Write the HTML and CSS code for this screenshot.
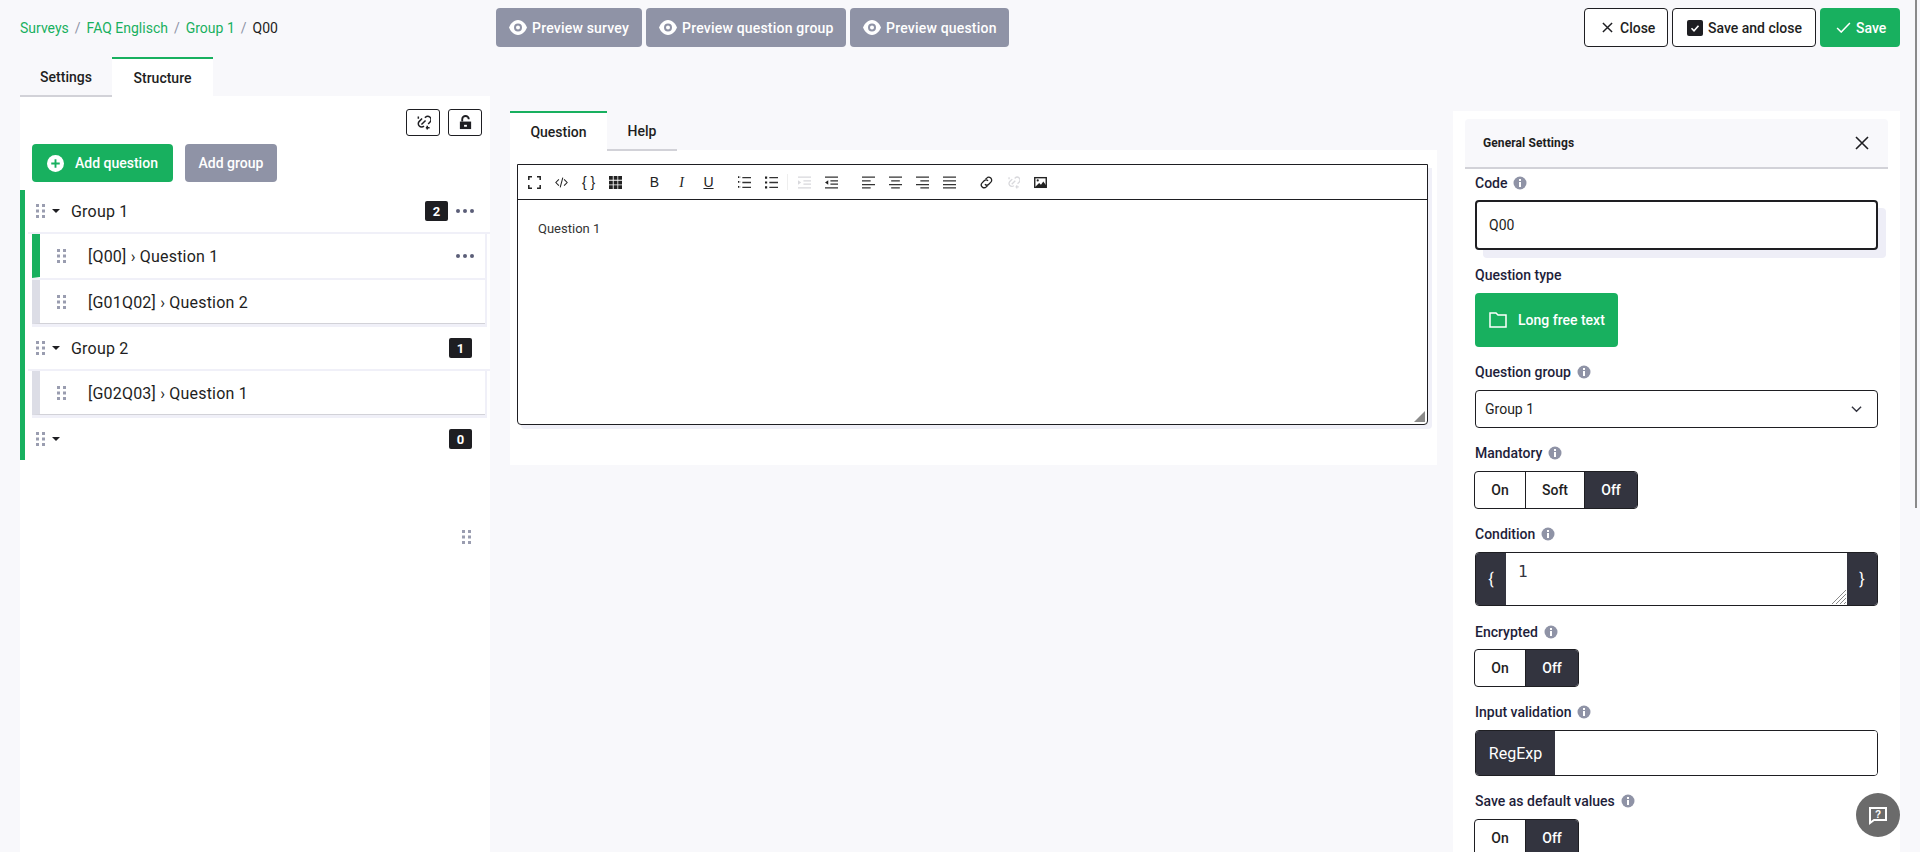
FILE: index.html
```html
<!DOCTYPE html>
<html lang="en">
<head>
<meta charset="utf-8">
<title>Q00</title>
<link rel="stylesheet" href="styles.css">
</head>
<body>
<svg class="defs" width="0" height="0" aria-hidden="true">
  <symbol id="grip" viewBox="0 0 9 14"><g fill="#9a9db0"><rect x="0" y="0" width="3" height="3"/><rect x="6" y="0" width="3" height="3"/><rect x="0" y="5.500" width="3" height="3"/><rect x="6" y="5.500" width="3" height="3"/><rect x="0" y="11" width="3" height="3"/><rect x="6" y="11" width="3" height="3"/></g></symbol>
  <symbol id="eye" viewBox="0 0 18 15"><path fill="#fff" d="M9 0C4.500 0 1.500 4 0 7.500 1.500 11 4.500 15 9 15s7.500-4 9-7.500C16.500 4 13.500 0 9 0z"/><circle cx="9" cy="7.500" r="3" fill="none" stroke="#8f93a6" stroke-width="2"/></symbol>
  <symbol id="dots" viewBox="0 0 18 4"><g fill="#5b5e78"><circle cx="2" cy="2" r="2"/><circle cx="9" cy="2" r="2"/><circle cx="16" cy="2" r="2"/></g></symbol>
  <symbol id="info" viewBox="0 0 14 14"><circle cx="7" cy="7" r="6.500" fill="#8f93a6"/><rect x="6" y="6" width="2" height="5" fill="#fff"/><rect x="6" y="3" width="2" height="2" fill="#fff"/></symbol>
  <symbol id="unlink" viewBox="0 0 16 16"><path fill="none" stroke="currentColor" stroke-width="1.600" d="M6.500 3.800 3.500 6.800a3.500 3.500 0 0 0 0 5 3.500 3.500 0 0 0 5 0M9.500 3 10 2.500a3.500 3.500 0 0 1 5 5l-2 2M5.800 10.200l4.400-4.400M2.500 1.500v2.500M12 11.500v4M10.500 13.500h4"/></symbol>
</svg>

<header class="topbar">
  <nav class="crumbs">
    <a>Surveys</a><span class="sep">/</span><a>FAQ Englisch</a><span class="sep">/</span><a>Group 1</a><span class="sep">/</span><span class="current">Q00</span>
  </nav>
  <div class="previews">
    <button class="btn grey pv-a"><svg class="eye"><use href="#eye"/></svg>Preview survey</button>
    <button class="btn grey pv-b"><svg class="eye"><use href="#eye"/></svg>Preview question group</button>
    <button class="btn grey pv-c"><svg class="eye"><use href="#eye"/></svg>Preview question</button>
  </div>
  <div class="actions">
    <button class="btn outline close-btn"><svg class="act-x" viewBox="0 0 12 12"><path d="M1 1l10 10M11 1 1 11" stroke="#1e1e22" stroke-width="1.600" fill="none"/></svg>Close</button>
    <button class="btn outline saveclose"><svg class="act-box" viewBox="0 0 16 16"><rect width="16" height="16" rx="2" fill="#1e1e22"/><path d="M4.500 8.300 7 10.800l4.500-5" stroke="#fff" stroke-width="1.600" fill="none"/></svg>Save and close</button>
    <button class="btn green savebtn"><svg class="act-check" viewBox="0 0 16 12"><path d="M1 6.500 5.500 11 15 1" stroke="#fff" stroke-width="1.600" fill="none"/></svg>Save</button>
  </div>
</header>

<main class="columns">
  <section class="left">
    <div class="tabs">
      <div class="tab t-settings">Settings</div>
      <div class="tab active t-structure">Structure</div>
    </div>
    <div class="tree">
      <div class="tree-tools">
        <button class="mini"><svg class="mini-ico"><use href="#unlink"/></svg></button>
        <button class="mini"><svg class="mini-ico" viewBox="0 0 16 16"><path fill="#1e1e22" d="M2 7h12v8H2z"/><path d="M4.500 7V4.500a3.500 3.500 0 0 1 7 0" fill="none" stroke="#1e1e22" stroke-width="2"/><rect x="6.500" y="10.500" width="3" height="2" fill="#fff"/></svg></button>
      </div>
      <div class="tree-add">
        <button class="btn green addq"><svg class="plus" viewBox="0 0 18 18"><circle cx="9" cy="9" r="9" fill="#fff"/><path d="M9 4.500v9M4.500 9h9" stroke="#18b05f" stroke-width="2"/></svg>Add question</button>
        <button class="btn grey addg">Add group</button>
      </div>
      <div class="groups">
        <div class="group">
          <svg class="grip"><use href="#grip"/></svg><span class="caret"></span><span class="gname">Group 1</span>
          <span class="count">2</span><svg class="dots"><use href="#dots"/></svg>
        </div>
        <div class="qs">
          <div class="q current-q">
            <svg class="grip"><use href="#grip"/></svg><span class="qname">[Q00] › Question 1</span><svg class="dots"><use href="#dots"/></svg>
          </div>
          <div class="q">
            <svg class="grip"><use href="#grip"/></svg><span class="qname">[G01Q02] › Question 2</span>
          </div>
        </div>
        <div class="group">
          <svg class="grip"><use href="#grip"/></svg><span class="caret"></span><span class="gname">Group 2</span>
          <span class="count solo">1</span>
        </div>
        <div class="qs">
          <div class="q">
            <svg class="grip"><use href="#grip"/></svg><span class="qname">[G02Q03] › Question 1</span>
          </div>
        </div>
        <div class="group">
          <svg class="grip"><use href="#grip"/></svg><span class="caret"></span><span class="gname"></span>
          <span class="count solo">0</span>
        </div>
      </div>
      <div class="resize-grip"><svg class="grip"><use href="#grip"/></svg></div>
    </div>
  </section>

  <section class="middle">
    <div class="tabs">
      <div class="tab active t-question">Question</div>
      <div class="tab t-help">Help</div>
    </div>
    <div class="editor-panel">
      <div class="editor">
        <div class="toolbar">
          <svg class="tb" viewBox="0 0 13 13"><path d="M.8 4V.8H4M9 .8h3.200V4M12.200 9v3.200H9M4 12.200H.8V9" fill="none" stroke="#222" stroke-width="1.500"/></svg>
          <svg class="tb" viewBox="0 0 15 13"><path d="M4.500 3 1 6.500 4.500 10M10.500 3 14 6.500 10.500 10M9 1 6 12" fill="none" stroke="#222" stroke-width="1.200"/></svg>
          <span class="tb glyph">{ }</span>
          <svg class="tb" viewBox="0 0 12 12"><path fill="#222" d="M0 0h3.500v3.500H0zM4.300 0h3.500v3.500H4.300zM8.500 0H12v3.500H8.500zM0 4.300h3.500v3.500H0zM4.300 4.300h3.500v3.500H4.300zM8.500 4.300H12v3.500H8.500zM0 8.500h3.500V12H0zM4.300 8.500h3.500V12H4.300zM8.500 8.500H12V12H8.500z"/></svg>
          <span class="tb glyph b">B</span>
          <span class="tb glyph i">I</span>
          <span class="tb glyph u">U</span>
          <svg class="tb g-list" viewBox="0 0 12 12"><path d="M4 1.500h8M4 6h8M4 10.500h8" stroke="#333" stroke-width="1.300"/><path d="M0 1h2M0 5.500h2M0 10h2" stroke="#222" stroke-width="1.600" stroke-dasharray="1 .6"/></svg>
          <svg class="tb" viewBox="0 0 12 12"><path d="M4 1.500h8M4 6h8M4 10.500h8" stroke="#333" stroke-width="1.300"/><path d="M0 1.500h2M0 6h2M0 10.500h2" stroke="#222" stroke-width="2"/></svg>
          <span class="tb-div"></span>
          <svg class="tb" viewBox="0 0 12 12"><path d="M0 1h12M5 4.500h7M5 7.500h7M0 11h12" stroke="#d8d8dc" stroke-width="1.300"/><path d="M0 4l3 2-3 2z" fill="#d8d8dc"/></svg>
          <svg class="tb" viewBox="0 0 12 12"><path d="M0 1h12M5 4.500h7M5 7.500h7M0 11h12" stroke="#333" stroke-width="1.300"/><path d="M3 4 0 6l3 2z" fill="#222"/></svg>
          <svg class="tb g-wide" viewBox="0 0 12 12"><path d="M0 1h12M0 4.500h8M0 8h12M0 11h8" stroke="#333" stroke-width="1.300"/></svg>
          <svg class="tb" viewBox="0 0 12 12"><path d="M0 1h12M2 4.500h8M0 8h12M2 11h8" stroke="#333" stroke-width="1.300"/></svg>
          <svg class="tb" viewBox="0 0 12 12"><path d="M0 1h12M4 4.500h8M0 8h12M4 11h8" stroke="#333" stroke-width="1.300"/></svg>
          <svg class="tb" viewBox="0 0 12 12"><path d="M0 1h12M0 4.500h12M0 8h12M0 11h12" stroke="#333" stroke-width="1.300"/></svg>
          <svg class="tb g-wide" viewBox="0 0 14 14"><path d="M6 3.500l1.200-1.200a3 3 0 0 1 4.500 4.300L9.500 8.800a3 3 0 0 1-4.200 0M8 10.500l-1.200 1.200a3 3 0 0 1-4.500-4.300l2.200-2.200a3 3 0 0 1 4.200 0" fill="none" stroke="#222" stroke-width="1.400"/></svg>
          <svg class="tb faded"><use href="#unlink"/></svg>
          <svg class="tb" viewBox="0 0 14 14"><rect x=".8" y="1.800" width="12.400" height="10.400" fill="none" stroke="#222" stroke-width="1.500"/><circle cx="4" cy="4.800" r="1.200" fill="#222"/><path d="M2 11l3.500-3.500 2 2L10 6l3 4v2H2z" fill="#222"/></svg>
        </div>
        <div class="editor-body">
          <p class="editor-text">Question 1</p>
          <svg class="resizer" viewBox="0 0 11 11"><path d="M11 0v11H0z" fill="#8a8a8a"/></svg>
        </div>
      </div>
    </div>
  </section>

  <aside class="right">
    <div class="panel-head">
      <span class="panel-title">General Settings</span>
      <svg class="panel-x" viewBox="0 0 14 14"><path d="M1 1l12 12M13 1 1 13" stroke="#1e1e22" stroke-width="1.600" fill="none"/></svg>
    </div>
    <div class="fields">
      <div class="field">
        <label class="lbl tight">Code <svg class="info"><use href="#info"/></svg></label>
        <div class="input code-input">Q00</div>
      </div>
      <div class="field">
        <label class="lbl">Question type</label>
        <button class="btn green type-btn"><svg class="folder" viewBox="0 0 18 16"><path d="M1 1h6l2 2h8v12H1z" fill="none" stroke="#fff" stroke-width="1.500"/></svg>Long free text</button>
      </div>
      <div class="field">
        <label class="lbl">Question group <svg class="info"><use href="#info"/></svg></label>
        <div class="input select"><span>Group 1</span><svg class="chev" viewBox="0 0 12 8"><path d="M1 1.500 6 6.500l5-5" fill="none" stroke="#33343f" stroke-width="1.500"/></svg></div>
      </div>
      <div class="field">
        <label class="lbl">Mandatory <svg class="info"><use href="#info"/></svg></label>
        <div class="toggle"><span class="opt">On</span><span class="opt soft">Soft</span><span class="opt sel">Off</span></div>
      </div>
      <div class="field wide-gap">
        <label class="lbl">Condition <svg class="info"><use href="#info"/></svg></label>
        <div class="cond"><span class="brace">{</span><div class="cond-in">1<svg class="cond-grip" viewBox="0 0 14 14"><path d="M14 0 0 14M14 4 4 14M14 8 8 14M14 12l-2 2" stroke="#8a8a8a" stroke-width="1"/></svg></div><span class="brace">}</span></div>
      </div>
      <div class="field">
        <label class="lbl tight">Encrypted <svg class="info"><use href="#info"/></svg></label>
        <div class="toggle"><span class="opt">On</span><span class="opt sel">Off</span></div>
      </div>
      <div class="field">
        <label class="lbl">Input validation <svg class="info"><use href="#info"/></svg></label>
        <div class="regex"><span class="regex-tag">RegExp</span><span class="regex-in"></span></div>
      </div>
      <div class="field">
        <label class="lbl">Save as default values <svg class="info"><use href="#info"/></svg></label>
        <div class="toggle"><span class="opt">On</span><span class="opt sel">Off</span></div>
      </div>
    </div>
  </aside>
</main>

<button class="help-bubble"><svg viewBox="0 0 20 20" width="20" height="20"><path d="M2 3h16v12H6l-4 3z" fill="none" stroke="#fff" stroke-width="2"/><text x="10" y="12.500" font-size="10" font-weight="700" fill="#fff" text-anchor="middle" font-family="Liberation Sans, sans-serif">?</text></svg></button>
<div class="scrollbar"></div>
</body>
</html>
```

FILE: styles.css
```css
* { box-sizing: border-box; }
body {
  margin: 0;
  height: 852px;
  overflow: hidden;
  background: #f8f8fb;
  color: #1e1e22;
  font-family: Roboto, sans-serif;
  font-size: 14px;
  position: relative;
}
.defs { position: absolute; }
button { font-family: inherit; }

.topbar {
  height: 57px;
  padding: 8px 20px 0 20px;
  display: flex;
  align-items: flex-start;
}
.crumbs { width: 476px; height: 39px; display: flex; align-items: center; font-size: 14px; }
.crumbs a { color: #18b05f; }
.sep { color: #8f93a6; margin: 0 6px; }
.current { color: #1e1e22; }
.previews { display: flex; gap: 4px; letter-spacing: .2px; }
.actions { margin-left: auto; display: flex; gap: 4px; }

.btn {
  height: 39px;
  border-radius: 4px;
  border: 0;
  display: inline-flex;
  align-items: center;
  justify-content: flex-start;
  font-size: 14px;
  font-weight: 500;
  padding: 0;
  white-space: nowrap;
  letter-spacing: inherit;
}
.btn svg { flex: none; }
.grey { background: #8f93a6; color: #fff; }
.green { background: #18b05f; color: #fff; }
.outline { background: #fff; border: 1px solid #1e1e22; color: #1e1e22; }
.pv-a { width: 146px; padding-left: 13px; }
.pv-b { width: 200px; padding-left: 13px; }
.pv-c { width: 159px; padding-left: 13px; }
.eye { width: 18px; height: 15px; margin-right: 5px; }
.close-btn { width: 84px; padding-left: 17px; }
.act-x { width: 11px; height: 11px; margin-right: 7px; }
.saveclose { width: 144px; padding-left: 14px; }
.act-box { width: 16px; height: 16px; margin-right: 5px; }
.savebtn { width: 80px; padding-left: 16px; }
.act-check { width: 15px; height: 11px; margin-right: 5px; }

.columns { display: flex; align-items: flex-start; padding-left: 20px; }
.left { width: 470px; flex: none; }
.middle { width: 927px; flex: none; margin-left: 20px; padding-top: 54px; }
.right {
  width: 447px; flex: none; margin-left: 16px; margin-top: 54px;
  background: #fff; height: 741px; padding: 8px 12px 0 12px; overflow: hidden;
}

.tabs { display: flex; height: 39px; position: relative; z-index: 1; }
.tab {
  height: 40px;
  padding-top: 2px;
  display: flex; align-items: center; justify-content: center;
  border-bottom: 2px solid #d2d2d8;
  font-weight: 500;
  font-size: 14px;
}
.tab.active {
  height: 39px;
  padding-top: 0;
  background: #fff;
  border-top: 2px solid #18b05f;
  border-bottom: 0;
}
.t-settings { width: 92px; }
.t-structure { width: 101px; }
.t-question { width: 97px; }
.t-help { width: 70px; }

.tree { background: #fff; height: 756px; position: relative; }
.tree-tools { height: 48px; padding: 13px 8px 0 0; display: flex; justify-content: flex-end; gap: 8px; }
.mini {
  width: 34px; height: 27px; padding: 0;
  border: 1px solid #1e1e22; border-radius: 3px; background: #fff; color: #1e1e22;
  display: flex; align-items: center; justify-content: center;
}
.mini-ico { width: 15px; height: 15px; }
.tree-add { display: flex; gap: 12px; padding-left: 12px; height: 46px; }
.addq { width: 141px; height: 38px; padding-left: 15px; }
.plus { width: 17px; height: 17px; margin-right: 11px; }
.addg { width: 92px; height: 38px; justify-content: center; }

.groups { border-left: 5px solid #18b05f; width: 470px; letter-spacing: .2px; }
.group {
  height: 44px;
  margin-left: 3px;
  border-bottom: 2px solid #f0f0f8;
  display: flex; align-items: center;
  padding-left: 8px;
  font-size: 16px;
  background: #fff;
}
.group:last-child { height: 42px; border-bottom: 0; }
.grip { width: 9px; height: 14px; flex: none; }
.caret { width: 0; height: 0; margin-left: 7px; border-left: 4px solid transparent; border-right: 4px solid transparent; border-top: 4px solid #1e1e22; }
.gname { margin-left: 11px; flex: 1; }
.count {
  width: 23px; height: 20px; background: #1e1e22; color: #fff;
  border-radius: 2px; font-size: 13px; font-weight: 700;
  display: flex; align-items: center; justify-content: center;
  margin-right: 8px;
}
.count.solo { margin-right: 18px; }
.dots { width: 18px; height: 4px; margin-right: 16px; flex: none; }
.qs { margin-left: 7px; width: 455px; background: #f0f0f8; padding: 0 2px 1px 0; }
.q {
  height: 44px;
  margin-bottom: 2px;
  padding-top: 1px;
  background: #fff;
  border-left: 8px solid #dcdde6;
  border-bottom: 1px solid #d2d2d8;
  display: flex; align-items: center;
  font-size: 16px;
}
.q.current-q { border-left-color: #18b05f; border-bottom-color: #fff; }
.q .grip { margin-left: 17px; }
.qname { margin-left: 22px; flex: 1; }
.q .dots { margin-right: 11px; }
.resize-grip { position: absolute; left: 442px; top: 434px; }

.editor-panel { background: #fff; height: 315px; padding: 14px 9px 0 7px; }
.editor {
  border: 1px solid #1e1e22; border-radius: 0 0 4px 4px; height: 261px;
  display: flex; flex-direction: column;
  background: #fff;
  box-shadow: 4px 4px 0 #f0f0f8;
}
.toolbar {
  height: 35px; border-bottom: 1px solid #1e1e22;
  display: flex; align-items: center; padding-left: 10px; gap: 14px;
  flex: none;
}
.tb { width: 13px; height: 13px; flex: none; display: block; }
.glyph { font-size: 14px; line-height: 13px; text-align: center; color: #222; font-family: "Liberation Sans", sans-serif; white-space: nowrap; }
.b { margin-left: 12px; }
.i { font-style: italic; font-family: "Liberation Serif", serif; }
.u { text-decoration: underline; }
.g-list { margin-left: 9px; }
.g-wide { margin-left: 10px; }
.tb-div { width: 1px; height: 16px; background: #eee; margin: 0 -4px 0 -5px; flex: none; }
.faded { color: #d8d8dc; }
.editor-body { flex: 1; position: relative; padding: 20px 20px; }
.editor-text { margin: 0; font-size: 13px; line-height: 18px; color: #333; }
.resizer { position: absolute; right: 2px; bottom: 2px; width: 11px; height: 11px; }

.panel-head {
  height: 50px; background: #f8f8fb; border-bottom: 2px solid #d2d2d8;
  border-radius: 4px 4px 0 0;
  display: flex; align-items: center; justify-content: space-between;
  padding: 0 19px 0 18px;
}
.panel-title { font-size: 12px; font-weight: 700; letter-spacing: .1px; }
.panel-x { width: 14px; height: 14px; }
.fields { padding: 5px 10px 0; width: 423px; }
.field { display: flex; flex-direction: column; align-items: flex-start; margin-bottom: 16px; }
.wide-gap { margin-bottom: 17px; }
.lbl { font-size: 14px; font-weight: 500; height: 18px; line-height: 18px; margin-bottom: 9px; display: flex; align-items: center; gap: 6px; color: #1e1e3a; }
.lbl.tight { margin-bottom: 8px; }
.info { width: 14px; height: 14px; }
.input { width: 403px; background: #fff; border: 1px solid #1e1e22; border-radius: 4px; display: flex; align-items: center; padding: 0 9px; }
.code-input { height: 50px; border-width: 2px; padding: 0 12px; box-shadow: 8px 8px 0 #eeeef7; }
.type-btn { width: 143px; height: 54px; padding-left: 14px; }
.folder { width: 18px; height: 16px; margin-right: 11px; }
.select { height: 38px; justify-content: space-between; }
.chev { width: 11px; height: 8px; margin-right: 6px; }
.toggle { display: flex; height: 38px; border: 1px solid #1e1e22; border-radius: 4px; overflow: hidden; background: #fff; margin-left: -1px; font-weight: 500; }
.opt { display: flex; align-items: center; justify-content: center; width: 51px; border-right: 1px solid #1e1e22; }
.opt:last-child { border-right: 0; }
.soft { width: 59px; }
.sel { background: #33343f; color: #fff; width: 52px; }
.cond { width: 403px; height: 54px; display: flex; border: 1px solid #1e1e22; border-radius: 4px; overflow: hidden; }
.brace { width: 30px; background: #33343f; color: #fff; display: flex; align-items: center; justify-content: center; font-size: 16px; }
.cond-in { flex: 1; padding: 9px 12px; line-height: 20px; font-family: "DejaVu Sans Mono", monospace; font-size: 16px; position: relative; color: #33343f; }
.cond-grip { position: absolute; right: 1px; bottom: 1px; width: 14px; height: 14px; }
.regex { width: 403px; height: 46px; display: flex; border: 1px solid #1e1e22; border-radius: 4px; overflow: hidden; }
.regex-tag { width: 79px; background: #33343f; color: #fff; display: flex; align-items: center; justify-content: center; font-size: 16px; }
.regex-in { flex: 1; background: #fff; }

.help-bubble {
  position: absolute; left: 1856px; top: 793px; width: 44px; height: 44px; border-radius: 50%;
  background: #6b6b6b; border: 0; display: flex; align-items: center; justify-content: center; padding: 0;
}
.scrollbar { position: absolute; right: 3px; top: 0; width: 2px; height: 508px; background: #8a8a8a; }
```
